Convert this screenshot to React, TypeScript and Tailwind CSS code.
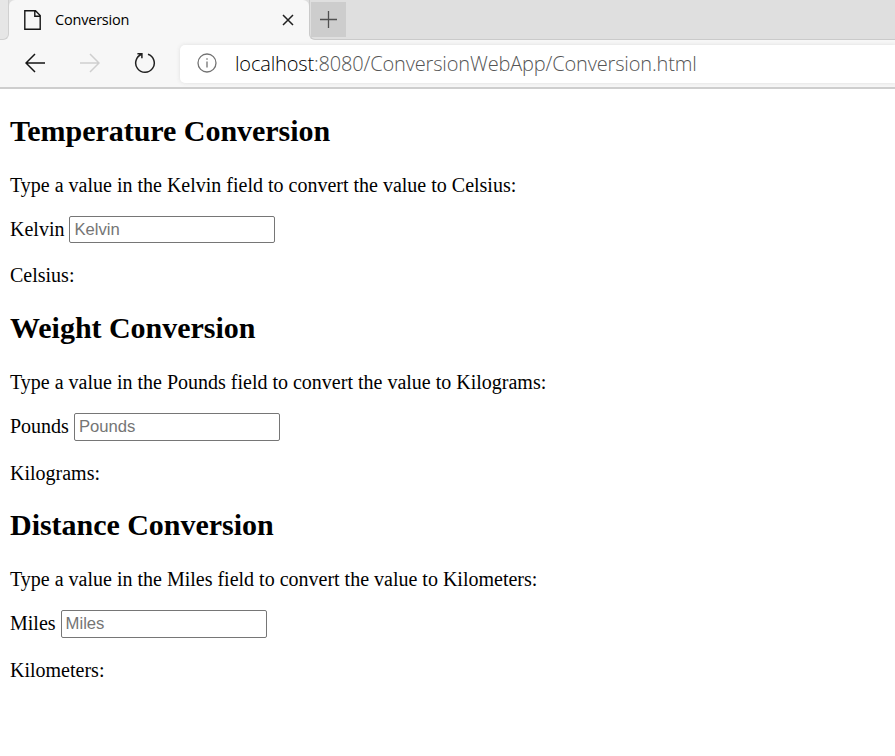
type SectionProps = {
  title: string;
  from: string;
  to: string;
  inputClass: string;
};

function ConversionSection({ title, from, to, inputClass }: SectionProps) {
  return (
    <section className="h-[197px] text-[20px] leading-[23px] whitespace-nowrap">
      <h2 className="h-[34px] text-[30px] leading-[34px] font-bold tracking-[-0.03px]">{title}</h2>
      <p className="mt-[26px]">
        Type a value in the {from} field to convert the value to {to}:
      </p>
      <label className="mt-[19px] flex items-start gap-[5px]">
        <span className="pt-[2px]">{from}</span>
        <input
          placeholder={from}
          className={`w-[206px] rounded-[2px] border border-[#767676] bg-white px-1 font-['Liberation_Sans',Arial,sans-serif] text-[16.67px] leading-[20px] outline-none placeholder:text-[#757575] ${inputClass}`}
        />
      </label>
      <p className="mt-[21px]">{to}:</p>
    </section>
  );
}

export default function App() {
  return (
    <div className="h-[756px] w-[895px] overflow-hidden bg-white text-black">
      <header className="flex h-[89px] flex-col border-b-2 border-[#cecece] bg-[#f7f7f7] font-['Open_Sans','Noto_Sans',sans-serif]">
        <div className="flex h-10 bg-[#dfdfdf]">
          <div className="flex w-[9px] bg-[#f7f7f7]">
            <div className="w-full rounded-br-[6px] border-r border-b border-[#d0d0d0] bg-[#e6e6e6]" />
          </div>
          <div className="flex w-[300px] items-center rounded-t-[6px] bg-[#f7f7f7] pl-[15px]">
            <svg width="17" height="20" viewBox="0 0 17 20" fill="none" stroke="#151515" strokeWidth="1.4">
              <path d="M.8.8h10.7l4.7 4.7v13.7H.8zM10.8.8v5.4h5.4" />
            </svg>
            <span className="ml-[14px] w-[227px] text-[14.5px] leading-5 tracking-[-0.2px]">Conversion</span>
            <svg width="12" height="12" viewBox="0 0 12 12" fill="none" stroke="#202020" strokeWidth="1.5">
              <path d="m1 1 10 10M11 1 1 11" />
            </svg>
          </div>
          <div className="flex flex-1 bg-[#f7f7f7]">
            <div className="flex-1 rounded-bl-[6px] border-b border-l border-[#cacaca] bg-[#dfdfdf] pt-[2px] pl-px">
              <button className="flex h-[35px] w-[35px] items-center justify-center bg-[#cdcdcd]">
                <svg width="17" height="17" viewBox="0 0 17 17" fill="none" stroke="#505050" strokeWidth="1.3">
                  <path d="M8.5 0v17M0 8.5h17" />
                </svg>
              </button>
            </div>
          </div>
        </div>
        <div className="flex h-[47px] items-center bg-[#f7f7f7] pl-[25px]">
          <svg className="mb-px" width="20" height="20" viewBox="0 0 20 20" fill="none" stroke="#151515" strokeWidth="1.5">
            <path d="M20 10H1M10 1l-9 9 9 9" />
          </svg>
          <svg className="mb-px ml-[35px]" width="20" height="20" viewBox="0 0 20 20" fill="none" stroke="#cfcfcf" strokeWidth="1.5">
            <path d="M0 10h19M10 1l9 9-9 9" />
          </svg>
          <svg className="mb-px ml-[34px]" width="22" height="22" viewBox="0 0 22 22" fill="none" stroke="#202020" strokeWidth="1.5">
            <path d="M14 2.2A9.3 9.3 0 1 1 7.7 2.3M3.4 1.7h4.5v4.6" />
          </svg>
          <div className="ml-6 flex h-[38px] flex-1 items-center rounded-l-[5px] bg-white pl-[17px] shadow-[0_0_4px_#dedede]">
            <svg className="mb-px" width="20" height="20" viewBox="0 0 20 20" fill="none" stroke="#737373" strokeWidth="1.3">
              <circle cx="10" cy="10" r="9" />
              <path d="M10 8.5v6M10 5.3v1.5" />
            </svg>
            <span className="ml-[18px] text-[20px] leading-6 tracking-[-0.16px] font-light text-[#555555]">
              <span className="text-black">localhost</span>:8080/ConversionWebApp/Conversion.html
            </span>
          </div>
        </div>
      </header>
      <main className="pt-[25px] pl-[10px] font-['Liberation_Serif','Times_New_Roman',serif]">
        <ConversionSection title="Temperature Conversion" from="Kelvin" to="Celsius" inputClass="h-[27px]" />
        <ConversionSection title="Weight Conversion" from="Pounds" to="Kilograms" inputClass="h-[28px]" />
        <ConversionSection title="Distance Conversion" from="Miles" to="Kilometers" inputClass="h-[28px]" />
      </main>
    </div>
  );
}
